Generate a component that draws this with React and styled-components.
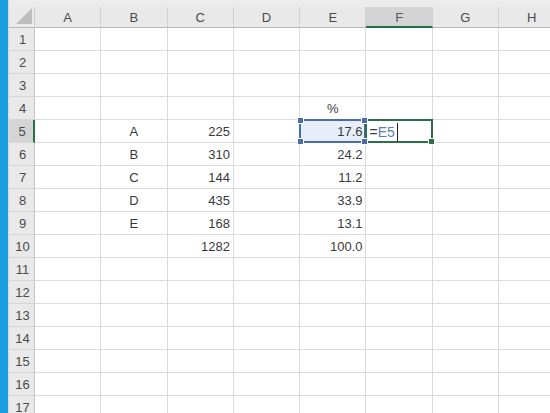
import React from "react";
import styled, { createGlobalStyle, css } from "styled-components";

const Global = createGlobalStyle`
  html, body { margin: 0; padding: 0; background: #ffffff; }
  body { width: 550px; height: 413px; overflow: hidden; font-family: "Liberation Sans", Arial, sans-serif; }
`;

const COLS = ["A", "B", "C", "D", "E", "F", "G", "H"];
const ROWS = 17;
const COL_W = 66.3;
const ROW_H = 23;

const data = {
  "4E": { v: "%", align: "center" },
  "5B": { v: "A", align: "center" },
  "6B": { v: "B", align: "center" },
  "7B": { v: "C", align: "center" },
  "8B": { v: "D", align: "center" },
  "9B": { v: "E", align: "center" },
  "5C": { v: "225" },
  "6C": { v: "310" },
  "7C": { v: "144" },
  "8C": { v: "435" },
  "9C": { v: "168" },
  "10C": { v: "1282" },
  "5E": { v: "17.6" },
  "6E": { v: "24.2" },
  "7E": { v: "11.2" },
  "8E": { v: "33.9" },
  "9E": { v: "13.1" },
  "10E": { v: "100.0" },
};

const Page = styled.div`
  display: flex;
  width: 550px;
  height: 413px;
  overflow: hidden;
`;

const Strip = styled.div`
  flex: 0 0 8px;
  background: #1a9fe0;
  border-right: 1px solid #d8d8d8;
`;

const Sheet = styled.div`
  flex: 1;
  display: flex;
  flex-direction: column;
  background: #ffffff;
`;

const TopBand = styled.div`
  flex: 0 0 7px;
  background: #ececec;
`;

const Grid = styled.div`
  display: grid;
  grid-template-columns: 26px repeat(${COLS.length}, ${COL_W}px);
  grid-template-rows: 21px;
  grid-auto-rows: ${ROW_H}px;
`;

const Corner = styled.div`
  position: relative;
  background: #e9e9e9;
  border-right: 1px solid #cfcfcf;
  border-bottom: 1px solid #b9b9b9;
  box-sizing: border-box;
`;

const Triangle = styled.div`
  position: absolute;
  right: 2px;
  bottom: 3px;
  width: 0;
  height: 0;
  border-left: 16px solid transparent;
  border-bottom: 16px solid #bdbdbd;
`;

const ColHead = styled.div`
  box-sizing: border-box;
  background: ${(p) => (p.$active ? "#d4d4d4" : "#e9e9e9")};
  border-right: 1px solid #d2d2d2;
  border-bottom: ${(p) => (p.$active ? "2px solid #217346" : "1px solid #b9b9b9")};
  display: flex;
  align-items: center;
  justify-content: center;
  font-size: 13px;
  color: ${(p) => (p.$active ? "#4a6354" : "#4a4a4a")};
  padding-top: ${(p) => (p.$active ? "1px" : "0")};
`;

const RowHead = styled.div`
  box-sizing: border-box;
  background: ${(p) => (p.$active ? "#d4d4d4" : "#e9e9e9")};
  border-right: ${(p) => (p.$active ? "2px solid #217346" : "1px solid #c6c6c6")};
  border-bottom: 1px solid #d6d6d6;
  display: flex;
  align-items: center;
  justify-content: center;
  font-size: 13px;
  color: #4a4a4a;
  padding-left: 2px;
`;

const Cell = styled.div`
  position: relative;
  box-sizing: border-box;
  border-right: 1px solid #dadada;
  border-bottom: 1px solid #dadada;
  display: flex;
  align-items: center;
  justify-content: ${(p) =>
    p.$align === "center" ? "center" : p.$align === "left" ? "flex-start" : "flex-end"};
  padding: 1px 3px 0 3px;
  font-size: 13px;
  color: #3a3a3a;
  white-space: nowrap;
  ${(p) =>
    p.$ref &&
    css`
      background: #e7eef9;
    `}
`;

const Frame = styled.div`
  position: absolute;
  left: -1px;
  top: -1px;
  right: -1px;
  bottom: -1px;
  border: 2px solid ${(p) => p.$color};
  pointer-events: none;
  z-index: 2;
`;

const Handle = styled.div`
  position: absolute;
  width: 5px;
  height: 5px;
  background: ${(p) => p.$color};
  border: 1px solid #ffffff;
  z-index: 3;
  ${(p) => (p.$top ? "top: -3px;" : "bottom: -3px;")}
  ${(p) => (p.$left ? "left: -3px;" : "right: -3px;")}
`;

const RefText = styled.span`
  color: #5a7cb8;
`;

const Caret = styled.span`
  display: inline-block;
  width: 1px;
  height: 18px;
  background: #222222;
  margin-left: 2px;
`;

const EditText = styled.span`
  display: flex;
  align-items: center;
  font-size: 14px;
`;

function renderCell(r, c) {
  const key = `${r}${c}`;
  const d = data[key];
  if (r === 5 && c === "E") {
    const blue = "#4a6ca8";
    return (
      <Cell key={key} $ref $align="right">
        {d.v}
        <Frame $color={blue} />
        <Handle $color={blue} $top $left />
        <Handle $color={blue} $top />
        <Handle $color={blue} $left />
        <Handle $color={blue} />
      </Cell>
    );
  }
  if (r === 5 && c === "F") {
    return (
      <Cell key={key} $align="left">
        <EditText>
          =<RefText>E5</RefText>
          <Caret />
        </EditText>
        <Frame $color="#2f6e48" />
        <Handle $color="#2f6e48" />
      </Cell>
    );
  }
  return (
    <Cell key={key} $align={d?.align}>
      {d?.v}
    </Cell>
  );
}

export default function App() {
  const rows = [];
  for (let r = 1; r <= ROWS; r++) {
    rows.push(
      <RowHead key={`h${r}`} $active={r === 5}>
        {r}
      </RowHead>
    );
    COLS.forEach((c) => rows.push(renderCell(r, c)));
  }
  return (
    <>
      <Global />
      <Page>
        <Strip />
        <Sheet>
          <TopBand />
          <Grid>
            <Corner>
              <Triangle />
            </Corner>
            {COLS.map((c) => (
              <ColHead key={c} $active={c === "F"}>
                {c}
              </ColHead>
            ))}
            {rows}
          </Grid>
        </Sheet>
      </Page>
    </>
  );
}
